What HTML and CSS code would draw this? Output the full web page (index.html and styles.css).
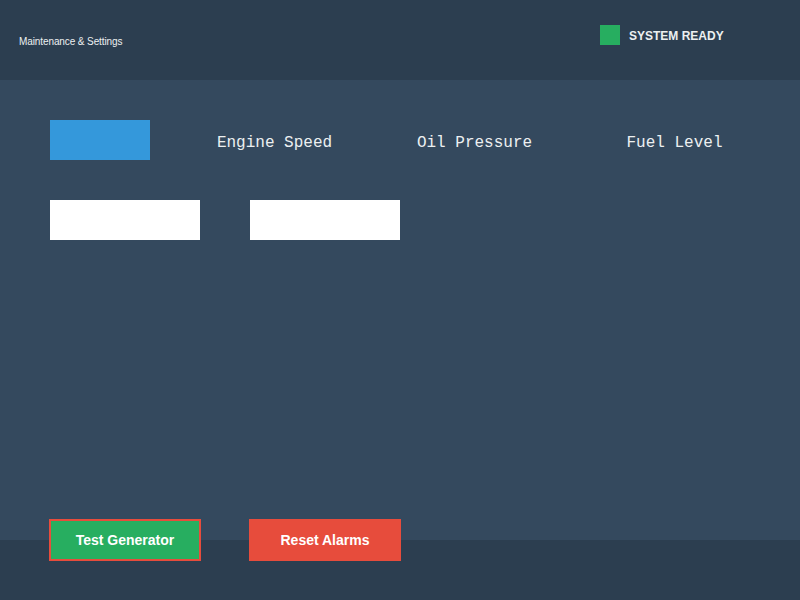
FILE: index.html
```html
<!DOCTYPE html>
<html>
<head>
<meta charset="utf-8">
<link rel="stylesheet" href="styles.css">
</head>
<body>
<header class="topbar">
  <div class="title">Maintenance &amp; Settings</div>
  <div class="status"><span class="status-dot"></span><span class="status-text">SYSTEM READY</span></div>
</header>
<main class="panel">
  <div class="tabs">
    <div class="tab"><span class="tab-active"></span></div>
    <div class="tab label">Engine Speed</div>
    <div class="tab label">Oil Pressure</div>
    <div class="tab label">Fuel Level</div>
  </div>
  <div class="fields">
    <div class="field"></div>
    <div class="field"></div>
  </div>
</main>
<footer class="bottombar">
  <button class="btn btn-test">Test Generator</button>
  <button class="btn btn-reset">Reset Alarms</button>
</footer>
</body>
</html>
```
FILE: styles.css
```css
html, body {
  margin: 0;
  padding: 0;
  width: 800px;
  height: 600px;
  overflow: hidden;
  background: #34495e;
  font-family: "Liberation Sans", Arial, sans-serif;
}
.topbar {
  height: 80px;
  background: #2c3e50;
  display: flex;
  align-items: flex-start;
  box-sizing: border-box;
  padding-left: 19px;
}
.title {
  width: 581px;
  margin-top: 36px;
  font-size: 10px;
  line-height: 12px;
  letter-spacing: -0.1px;
  color: #ecf0f1;
}
.status {
  display: flex;
  align-items: center;
  margin-top: 25px;
  gap: 9px;
}
.status-dot {
  width: 20px;
  height: 20px;
  background: #27ae60;
}
.status-text {
  font-size: 12px;
  line-height: 14px;
  margin-top: 2px;
  font-weight: bold;
  color: #ecf0f1;
}
.panel {
  height: 460px;
  box-sizing: border-box;
  padding-top: 40px;
  background: #34495e;
}
.tabs {
  display: grid;
  grid-template-columns: repeat(4, 200px);
  height: 40px;
}
.tab {
  height: 40px;
}
.tab-active {
  display: block;
  width: 100px;
  height: 40px;
  margin-left: 50px;
  background: #3498db;
}
.label {
  box-sizing: border-box;
  padding-right: 51px;
  padding-top: 2px;
  text-align: center;
  font-family: "Liberation Mono", "Courier New", monospace;
  font-size: 16px;
  line-height: 42px;
  color: #ecf0f1;
}
.fields {
  display: flex;
  gap: 50px;
  margin-top: 40px;
  padding-left: 50px;
}
.field {
  width: 150px;
  height: 40px;
  background: #ffffff;
}
.bottombar {
  height: 60px;
  background: #2c3e50;
  display: flex;
  align-items: flex-start;
  gap: 48px;
  padding-left: 49px;
}
.btn {
  width: 152px;
  height: 42px;
  margin-top: -21px;
  box-sizing: border-box;
  border: 2px solid #e74c3c;
  padding: 0;
  font-family: "Liberation Sans", Arial, sans-serif;
  font-size: 14px;
  font-weight: bold;
  color: #ffffff;
  cursor: pointer;
}
.btn-test {
  background: #27ae60;
}
.btn-reset {
  background: #e74c3c;
}
```
